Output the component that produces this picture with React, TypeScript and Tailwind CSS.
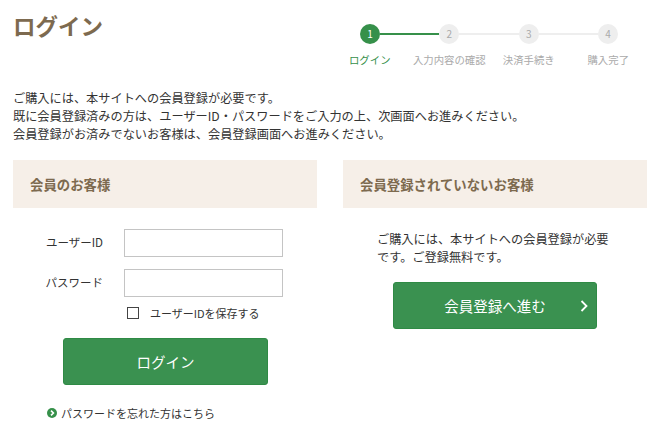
const font = "font-['Noto_Sans_CJK_JP','Noto_Sans',sans-serif]";

const steps = [
  { n: 1, label: "ログイン" },
  { n: 2, label: "入力内容の確認" },
  { n: 3, label: "決済手続き" },
  { n: 4, label: "購入完了" },
];

function Stepper() {
  return (
    <div className="w-[318px] mt-6 mr-3">
      <div className="flex items-center px-[30px]">
        <div className="w-5 h-5 rounded-full bg-[#36904a] text-white text-[10px] leading-5 text-center shrink-0">1</div>
        <div className="flex-1 h-0.5 bg-[#36904a]" />
        <div className="w-5 h-5 rounded-full bg-[#eeeeee] text-[#aaaaaa] text-[10px] leading-5 text-center shrink-0">2</div>
        <div className="flex-1 h-0.5 bg-[#eeeeee]" />
        <div className="w-5 h-5 rounded-full bg-[#eeeeee] text-[#aaaaaa] text-[10px] leading-5 text-center shrink-0">3</div>
        <div className="flex-1 h-0.5 bg-[#eeeeee]" />
        <div className="w-5 h-5 rounded-full bg-[#eeeeee] text-[#aaaaaa] text-[10px] leading-5 text-center shrink-0">4</div>
      </div>
      <div className="grid grid-cols-4 mt-2 text-[10.4px] leading-4 text-[#aaaaaa]">
        {steps.map((s) => (
          <div key={s.n} className={`text-center whitespace-nowrap ${s.n === 1 ? "text-[#36904a]" : ""}`}>
            {s.label}
          </div>
        ))}
      </div>
    </div>
  );
}

export default function App() {
  return (
    <div className={`w-[660px] h-[440px] overflow-hidden bg-white text-[#333333] ${font}`}>
      <div className="flex justify-between items-start pl-[13px]">
        <h1 className="text-[22.5px] leading-[30px] font-bold text-[#7d6a4f] mt-2.5">ログイン</h1>
        <Stepper />
      </div>

      <div className="px-[13px] mt-[21px] text-[12.2px] leading-[18px]">
        <p>ご購入には、本サイトへの会員登録が必要です。</p>
        <p>既に会員登録済みの方は、ユーザーID・パスワードをご入力の上、次画面へお進みください。</p>
        <p>会員登録がお済みでないお客様は、会員登録画面へお進みください。</p>
      </div>

      <div className="flex gap-[26px] pl-[13px] mt-[17px]">
        <section className="w-[304px]">
          <h2 className="h-12 bg-[#f6efe8] pl-[17px] text-[13.4px] font-bold leading-[48px] text-[#7d6a4f]">会員のお客様</h2>
          <div className="flex items-center mt-[21px]">
            <label className="w-[111px] pr-[21px] text-right text-[11.5px]">ユーザーID</label>
            <input className="w-[159px] h-[28px] border border-[#c4c4c4] bg-white" />
          </div>
          <div className="flex items-center mt-3">
            <label className="w-[111px] pr-[21px] text-right text-[11.5px]">パスワード</label>
            <input className="w-[159px] h-[28px] border border-[#c4c4c4] bg-white" />
          </div>
          <label className="flex items-center ml-[114px] mt-[7px] text-[11px] leading-[18px]">
            <span className="w-3 h-3 border border-[#444444] mr-[11px]" />
            ユーザーIDを保存する
          </label>
          <button className="block w-[205px] h-[47px] ml-[50px] mt-4 rounded-[3px] border border-[#2f8a45] bg-[#3a9150] text-white text-[14.5px]">ログイン</button>
          <div className="flex items-center ml-[34px] mt-5 text-[11px] leading-4">
            <svg viewBox="0 0 10 10" className="w-[10px] h-[10px] mr-1 shrink-0">
              <circle cx="5" cy="5" r="5" fill="#36904a" />
              <path d="M4 2.6 6.4 5 4 7.4" fill="none" stroke="#fff" strokeWidth="1.6" />
            </svg>
            パスワードを忘れた方はこちら
          </div>
        </section>

        <section className="w-[304px]">
          <h2 className="h-12 bg-[#f6efe8] pl-[17px] text-[13.4px] font-bold leading-[48px] text-[#7d6a4f]">会員登録されていないお客様</h2>
          <p className="mt-[22px] ml-[34px] w-[236px] text-[12.2px] leading-[18px]">
            ご購入には、本サイトへの会員登録が必要です。ご登録無料です。
          </p>
          <button className="relative block w-[204px] h-[47px] ml-[50px] mt-4 rounded-[3px] border border-[#2f8a45] bg-[#3a9150] text-white text-[14.5px]">
            <span>会員登録へ進む</span>
            <svg viewBox="0 0 10 12" className="absolute right-[7px] top-[17px] w-[10px] h-[12px]">
              <path d="M2.5 1 7.5 6l-5 5" fill="none" stroke="#fff" strokeWidth="1.8" />
            </svg>
          </button>
        </section>
      </div>
    </div>
  );
}
